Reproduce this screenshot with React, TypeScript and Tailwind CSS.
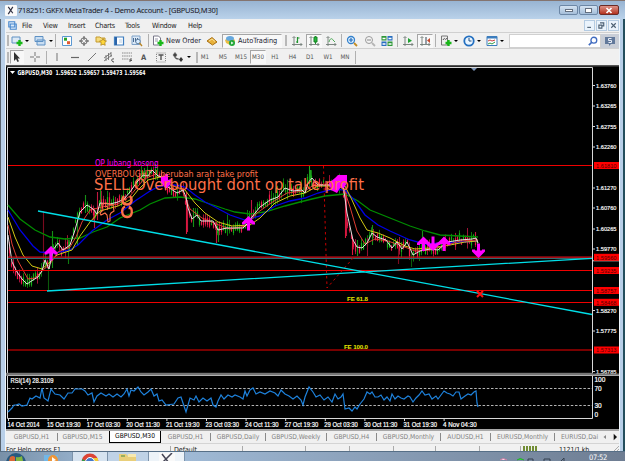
import type { ReactNode } from "react";
import { clsx } from "clsx";

type Point = [number, number];

const white: Point[] = [
  [8, 235], [12, 262], [17, 272], [22, 279], [27, 284], [33, 280], [38, 277], [42, 271], [45, 260], [49, 269], [53, 250], [58, 243],
  [63, 250], [70, 245], [75, 230], [80, 212], [87, 205], [93, 209], [97, 214], [100, 203], [110, 204], [118, 202], [124, 199],
  [130, 192], [137, 182], [143, 175], [148, 176], [152, 170], [158, 176], [163, 177], [168, 187], [177, 193], [183, 190],
  [186, 197], [188, 208], [192, 219], [197, 215], [201, 221], [213, 221], [218, 230], [227, 228], [243, 228], [248, 223], [252, 217], [260, 207],
  [270, 200], [278, 197], [285, 188], [293, 191], [302, 190], [305, 193], [308, 183], [312, 178], [318, 185], [330, 185], [343, 184],
  [347, 213], [353, 240], [357, 247], [362, 248], [367, 243], [372, 233], [377, 237], [386, 240], [392, 248], [397, 242], [402, 249],
  [407, 242], [413, 255], [420, 251], [430, 249], [438, 250], [447, 242], [454, 241], [460, 240], [472, 239], [476, 238], [478, 243]
];

const red: Point[] = [
  [8, 225], [12, 244], [18, 261], [28, 279], [35, 278], [43, 270], [50, 264], [58, 252], [70, 247], [76, 237], [82, 222], [90, 210],
  [102, 207], [118, 204], [130, 196], [144, 179], [156, 174], [168, 183], [182, 190], [190, 209], [202, 218], [216, 224], [230, 229],
  [246, 226], [257, 213], [271, 203], [287, 193], [305, 191], [315, 184], [330, 185], [343, 186], [350, 207], [357, 231], [365, 244],
  [375, 239], [388, 241], [402, 246], [415, 251], [430, 250], [447, 245], [460, 241], [478, 240]
];

const yellow: Point[] = [
  [8, 217], [15, 237], [23, 255], [32, 266], [42, 269], [50, 262], [57, 255], [72, 250], [80, 236], [90, 222], [100, 211], [118, 206],
  [130, 200], [138, 190], [148, 180], [160, 177], [170, 185], [185, 190], [195, 203], [205, 213], [218, 222], [232, 226], [250, 225],
  [260, 218], [275, 203], [290, 196], [305, 193], [318, 186], [345, 186], [352, 200], [360, 218], [367, 230], [378, 233], [390, 238],
  [405, 246], [415, 249], [430, 248], [450, 245], [465, 242], [478, 241]
];

const blue: Point[] = [
  [8, 210], [20, 230], [33, 246], [40, 252], [55, 253], [70, 250], [78, 245], [92, 231], [107, 220], [120, 213], [135, 201], [150, 191],
  [160, 186], [175, 185], [185, 187], [195, 195], [205, 202], [215, 207], [230, 215], [245, 220], [260, 216], [275, 206], [290, 201],
  [305, 198], [318, 193], [333, 189], [345, 190], [355, 201], [365, 215], [378, 225], [390, 231], [410, 240], [425, 244], [445, 243],
  [460, 242], [478, 241]
];

const green: Point[] = [
  [8, 205], [20, 219], [35, 230], [50, 237], [65, 239], [80, 238], [93, 232], [107, 227], [120, 218], [140, 210], [150, 204], [165, 198],
  [180, 197], [195, 199], [210, 204], [225, 209], [235, 212], [250, 214], [265, 212], [285, 206], [300, 202], [312, 199], [325, 196],
  [345, 194], [358, 201], [370, 210], [390, 218], [410, 226], [425, 231], [440, 235], [460, 236], [478, 237]
];

const rsi: Point[] = [
  [8, 412], [12, 408], [14, 405], [16, 405], [19, 404], [22, 406], [27, 405], [30, 398], [32, 399], [36, 396], [40, 398], [42, 388],
  [44, 398], [48, 401], [51, 389], [55, 394], [60, 395], [64, 399], [68, 393], [72, 393], [75, 389], [82, 389], [85, 391], [88, 395],
  [92, 393], [94, 402], [97, 396], [101, 393], [106, 396], [109, 394], [113, 397], [117, 394], [121, 397], [124, 394], [127, 389],
  [129, 396], [131, 390], [134, 391], [138, 387], [141, 392], [144, 395], [148, 392], [151, 389], [154, 396], [157, 394], [159, 401],
  [162, 400], [166, 405], [174, 404], [178, 398], [181, 397], [184, 406], [186, 412], [190, 398], [194, 400], [196, 396], [199, 402],
  [203, 398], [207, 401], [211, 398], [213, 405], [216, 407], [218, 401], [221, 395], [224, 399], [228, 395], [232, 397], [235, 395],
  [240, 397], [243, 399], [245, 391], [247, 396], [250, 390], [253, 388], [256, 394], [260, 392], [265, 394], [270, 391], [275, 393],
  [278, 396], [281, 390], [285, 394], [289, 396], [293, 399], [297, 396], [301, 400], [303, 405], [305, 397], [309, 387], [313, 392],
  [316, 397], [320, 395], [324, 400], [328, 397], [332, 402], [335, 394], [338, 399], [341, 397], [343, 394], [345, 409], [349, 408],
  [352, 411], [355, 407], [357, 409], [360, 404], [364, 399], [367, 392], [370, 394], [372, 392], [375, 397], [378, 397], [381, 395],
  [384, 400], [387, 397], [390, 401], [392, 394], [395, 399], [398, 396], [401, 398], [404, 399], [408, 396], [410, 397], [413, 402],
  [416, 398], [419, 395], [422, 391], [425, 395], [429, 394], [432, 399], [436, 396], [438, 399], [441, 395], [444, 391], [447, 393],
  [450, 394], [453, 396], [456, 392], [459, 392], [461, 399], [465, 396], [468, 394], [471, 395], [474, 392], [476, 391], [477, 403], [478, 407]
];

const spikes: [number, number, number, string][] = [
  [43, 211, 262, "#7a0a1e"], [48, 268, 291, "#0b5a0b"], [52, 231, 268, "#159015"], [65, 238, 258, "#8f1030"], [68, 240, 264, "#0f7a0f"],
  [77, 215, 245, "#159015"], [85, 195, 213, "#159015"], [94, 208, 228, "#c01840"], [97, 192, 220, "#c01840"], [100, 190, 212, "#159015"],
  [144, 168, 185, "#159015"], [157, 167, 180, "#159015"], [186, 192, 234, "#e0163c"], [187, 200, 232, "#c01840"], [193, 208, 227, "#159015"],
  [216, 222, 243, "#c01840"], [218, 228, 242, "#159015"], [251, 200, 222, "#c01840"], [309, 166, 184, "#1fa01f"], [310, 170, 180, "#1fa01f"],
  [345, 190, 238, "#e0163c"], [346, 192, 236, "#c01840"], [352, 238, 255, "#e0163c"], [357, 240, 256, "#159015"], [367, 238, 256, "#8f1030"],
  [372, 225, 245, "#159015"], [398, 246, 264, "#7a0a1e"], [411, 250, 267, "#0b5a0b"], [422, 231, 250, "#159015"], [475, 232, 243, "#c01840"],
  [478, 244, 260, "#c01840"]
];

const prices: [string, number][] = [
  ["1.63760", 85.5], ["1.63265", 106], ["1.62755", 126.5], ["1.62260", 147], ["1.61270", 188], ["1.60760", 208], ["1.60265", 229],
  ["1.59770", 249], ["1.58270", 310.5], ["1.57775", 331], ["1.56785", 371.5]
];

const levels: [string, number][] = [
  ["1.61810", 165.5], ["1.59560", 257.3], ["1.59235", 270.5], ["1.58757", 290.5], ["1.58468", 302.3], ["1.57313", 350]
];

const dates = [
  "14 Oct 2014", "15 Oct 19:30", "17 Oct 03:30", "20 Oct 11:30", "21 Oct 19:30", "23 Oct 03:30",
  "24 Oct 11:30", "27 Oct 19:30", "29 Oct 03:30", "30 Oct 11:30", "31 Oct 19:30", "4 Nov 04:30"
];

const toPoints = (list: Point[]) => list.map((p) => p.join(",")).join(" ");

function valueAt(list: Point[], x: number) {
  for (let i = 1; i < list.length; i++) {
    const [x0, y0] = list[i - 1];
    const [x1, y1] = list[i];
    if (x <= x1) return y0 + ((y1 - y0) * (x - x0)) / (x1 - x0);
  }
  return list[list.length - 1][1];
}

function buildCandles() {
  let seed = 71;
  const rnd = () => {
    seed = (seed * 16807) % 2147483647;
    return seed / 2147483647;
  };
  const candles = [];
  for (let x = 9.5; x < 478; x += 2) {
    const slope = valueAt(white, x + 2) - valueAt(white, x - 2);
    const mid = valueAt(white, x) + slope * 0.3 + (rnd() - 0.5) * 6;
    const up = rnd() > 0.5 + slope * 0.06;
    const body = 1 + rnd() * 3.2;
    const wick = body + 1 + rnd() * rnd() * 9;
    candles.push({ x, mid, body, wick, color: up ? "#16b016" : "#f0184a", dim: up ? "#0c7a0c" : "#a01236" });
  }
  return candles;
}

const candles = buildCandles();

function Arrow({ x, y, down = false }: { x: number; y: number; down?: boolean }) {
  return (
    <g transform={`translate(${x} ${y})${down ? " scale(1 -1)" : ""}`} fill="none" stroke="#ff00ff" strokeWidth="3">
      <path d="M0 7.500V-5M-5 1.500V0L0-5L5 0V1.500" />
      <path d="M-4 0L0-5L4 0Z" fill="#ff00ff" strokeWidth="1" />
    </g>
  );
}

function Chart() {
  return (
    <svg viewBox="6 65 613 364" className="block h-[364px] w-[613px] shrink-0 bg-black font-['DejaVu_Sans_Condensed','DejaVu_Sans',sans-serif]">
      <rect x="6" y="65" width="613" height="1.500" fill="#555" />
      <path d="M7.500 373V67.500H592.500V373" fill="none" stroke="#d8d8d8" />
      <path d="M471 68h6l-3 3z" fill="#7d93b5" />

      {candles.map((c) => (
        <g key={c.x}>
          <path d={`M${c.x} ${c.mid - c.wick}V${c.mid + c.wick * 0.8}`} stroke={c.dim} />
          <path d={`M${c.x} ${c.mid - c.body}V${c.mid + c.body}`} stroke={c.color} strokeWidth="1.200" />
        </g>
      ))}
      {spikes.map(([x, y0, y1, color], i) => (
        <path key={i} d={`M${x + 0.5} ${y0}V${y1}`} stroke={color} strokeWidth="1.100" />
      ))}

      <g fill="none" strokeWidth="1">
        <polyline points={toPoints(green)} stroke="#008c00" strokeWidth="1.300" />
        <polyline points={toPoints(blue)} stroke="#0000e6" strokeWidth="1.300" />
        <polyline points={toPoints(yellow)} stroke="#d2c814" />
        <polyline points={toPoints(red)} stroke="#e03c32" />
        <polyline points={toPoints(white)} stroke="#e6dcdc" />
      </g>

      <path d="M8 258.500H592" stroke="#2f6a70" />
      <path d="M8 257.200H592" stroke="#d8101c" strokeWidth="1.300" />
      <path d="M8 165.500H592M8 270.500H592M8 290.500H592M8 302.500H592M8 350H592" stroke="#f00000" strokeWidth="1.200" />
      <path d="M323.500 166L327 288L354 257" fill="none" stroke="#c80000" strokeDasharray="2.500 3" />
      <path d="M38 211L592 314.500M47 291L592 258.300" stroke="#00dfe8" strokeWidth="1.300" />
      <path d="M477 291l6 6m0-6l-6 6" stroke="#ff1010" strokeWidth="2" />

      <Arrow x={51} y={253} />
      <Arrow x={248.500} y={223} />
      <path d="M161 176h4v-2h3v6l3-1v4l-4 5h-2l-4-6z" fill="#ff00ff" />
      <path d="M329 183l6-5 3-3h9v8l-3 5-4 0-3 5-6-3z" fill="#ff00ff" />
      <Arrow x={423.500} y={243.500} />
      <Arrow x={433} y={244} down />
      <Arrow x={444} y={243.500} />
      <Arrow x={478.500} y={251} down />

      <g fill="#ff7048">
        <text x="95" y="166" fontSize="8" fill="#ff00ff" textLength="63.500" lengthAdjust="spacingAndGlyphs">OP lubang kosong</text>
        <text x="95" y="176.500" fontSize="9.300" textLength="163" lengthAdjust="spacingAndGlyphs">OVERBOUGHT ! berubah arah take profit</text>
        <text x="94" y="190" fontSize="16.500" textLength="270" lengthAdjust="spacingAndGlyphs">SELL Overbought dont op take profit</text>
      </g>
      <g fill="none" stroke="#ff7048">
        <path d="M102 204l4-1 7 2 1 6-3 2-1 2v6l-2 1-1-7-2-2-4 2-1-2 3-3zM105 206l3 1-1 3" strokeWidth="1.100" />
        <path d="M124 196c-3 4-1.500 8.500 3 8.500s6-4.500 3-8.500M125 206.500c-4 2-4 10 2 10.500s6-8.500 2-10.500" strokeWidth="2.400" />
        <path d="M124 199.500h2.500M128.500 208.500h2.500" strokeWidth="1.500" />
      </g>
      <g fontSize="6.200" fontWeight="bold" fill="#e8e800" className="font-['Liberation_Sans',sans-serif]">
        <text x="347" y="300.500" textLength="21">FE 61.8</text>
        <text x="344" y="348.500" textLength="24">FE 100.0</text>
      </g>

      <path d="M10 71h5l-2.500 3z" fill="#fff" />
      <text x="17.500" y="74.800" fontSize="6.700" fontWeight="bold" fill="#fff" textLength="128" lengthAdjust="spacingAndGlyphs" className="whitespace-pre">
        GBPUSD,M30  1.59652 1.59657 1.59473 1.59564
      </text>

      <g fontSize="6.200" stroke="#f4f4f4" strokeWidth=".2" fill="#f4f4f4" className="font-['Liberation_Sans',sans-serif]">
        {prices.map(([label, y]) => (
          <g key={label}>
            <path d={`M593 ${y}h2`} stroke="#d8d8d8" strokeWidth="1" />
            <text x="596" y={y + 2.200} textLength="20.500" lengthAdjust="spacingAndGlyphs">{label}</text>
          </g>
        ))}
      </g>
      <path d="M593 260.800H619" stroke="#d8d8d8" />
      {levels.map(([label, y]) => (
        <g key={label}>
          <rect x="594" y={y - 3.500} width="25" height="7" fill="#f00" />
          <text x="596" y={y + 2.200} fontSize="6.200" textLength="20.500" lengthAdjust="spacingAndGlyphs" fill="#500000" className="font-['Liberation_Sans',sans-serif]">{label}</text>
        </g>
      ))}

      <rect x="6" y="372.800" width="587" height="3" fill="#777" />
      <path d="M6 374.500H619" stroke="#777" strokeWidth="2" />
      <path d="M7.500 375.500H619" stroke="#c4c4c4" strokeWidth=".8" />
      <path d="M7.500 376V418.500H592.500V376" fill="none" stroke="#d8d8d8" />
      <path d="M8 388.500H592M8 405.500H592" stroke="#b4b4b4" strokeDasharray="2.500 1.700" />
      <polyline points={toPoints(rsi)} fill="none" stroke="#1e82dc" strokeWidth="1.200" />
      <g fontSize="6.500" fill="#fff" stroke="#fff" strokeWidth=".2" className="font-['Liberation_Sans',sans-serif]">
        <text x="10.500" y="383" textLength="43" lengthAdjust="spacingAndGlyphs">RSI(14) 28.3109</text>
        <text x="594.500" y="382">100</text>
        <text x="594.500" y="390.700">70</text>
        <text x="594.500" y="407.500">30</text>
        <text x="594.500" y="416.800">0</text>
        {dates.map((label, i) => (
          <g key={label}>
            <path d={`M${8.500 + i * 39.600} 419v2`} stroke="#d8d8d8" strokeWidth="1" />
            <text x={7.500 + i * 39.600} y="426.500" textLength={i === 0 ? 32 : 33.500} lengthAdjust="spacingAndGlyphs">{label}</text>
          </g>
        ))}
      </g>
    </svg>
  );
}

function Icon({ children, className }: { children: ReactNode; className?: string }) {
  return (
    <svg viewBox="0 0 12 12" className={clsx("shrink-0", className ?? "h-3 w-3")} fill="none">
      {children}
    </svg>
  );
}

function Cell({ className, pressed = false, children }: { className: string; pressed?: boolean; children?: ReactNode }) {
  return (
    <div
      className={clsx(
        "flex shrink-0 items-center justify-center whitespace-nowrap",
        pressed ? "h-[14px] border border-[#a5a5a5] border-r-[#f8f8f8] border-b-[#f8f8f8] bg-[#f8f8f8]" : "h-full",
        className
      )}
    >
      {children}
    </div>
  );
}

function Caret({ className }: { className: string }) {
  return (
    <Cell className={className}>
      <span className="h-0 w-0 border-x-2 border-t-2 border-x-transparent border-t-black" />
    </Cell>
  );
}

function Sep({ className }: { className: string }) {
  return (
    <Cell className={className}>
      <span className="h-[13px] w-px bg-[#b0b0b0]" />
    </Cell>
  );
}

function Grip({ className }: { className: string }) {
  return (
    <Cell className={className}>
      <span className="h-[11px] w-[2px] bg-[#b8b8b8]" />
    </Cell>
  );
}

const plus = <path d="M8.500 5v6M5.500 8h6" stroke="#18b818" strokeWidth="2.400" />;
const axes = <path d="M3 2v9M1 9.500h10M1.500 3L3 1.500 4.500 3M9.500 8L11 9.500 9.500 11" stroke="#6f7a75" strokeWidth=".9" />;

function TitleBar() {
  return (
    <div className="flex h-[19px] shrink-0 items-center border-t border-[#84746f] bg-gradient-to-b from-[#98b4d2] to-[#bad2ea] pr-[6px] pl-[5px]">
      <svg viewBox="0 0 12 12" className="h-[11px] w-3 rounded-[1px] bg-[#fafafa]">
        <path d="M3 2l5 7M8 2L3 10" stroke="#334" strokeWidth="1.300" />
      </svg>
      <span className="ml-[1px] pt-px font-['Noto_Sans',sans-serif] text-[7.500px] leading-none tracking-[-0.250px] whitespace-pre text-[#171522]">718251: GKFX MetaTrader 4 - Demo Account - [GBPUSD,M30]</span>
      <div className="ml-auto flex h-[10px] gap-[1px] pt-0 [&>span]:flex [&>span]:items-center [&>span]:justify-center [&>span]:rounded-[2px] [&>span]:border">
        <span className="w-[19px] border-[#6c87a6] bg-gradient-to-b from-[#d4e3f2] to-[#a5bed9]">
          <i className="h-[3px] w-[8px] border border-[#657080] bg-white" />
        </span>
        <span className="w-[19px] border-[#6c87a6] bg-gradient-to-b from-[#d4e3f2] to-[#a5bed9]">
          <i className="h-[5px] w-[7px] border border-[#657080] bg-white" />
        </span>
        <span className="w-[20px] border-[#6b2b26] bg-gradient-to-b from-[#dd9187] to-[#b3301d]">
          <svg viewBox="0 0 8 7" className="h-[7px] w-2">
            <path d="M1.500 1l5 5m0-5l-5 5" stroke="#fff" strokeWidth="1.700" />
          </svg>
        </span>
      </div>
    </div>
  );
}

function MenuBar() {
  return (
    <div className="flex h-[13px] items-center bg-[#f0f0f0] pl-[2px] font-['DejaVu_Sans_Condensed',sans-serif] text-[7.300px] leading-none tracking-[-0.250px] text-[#222]">
      <Icon className="h-[9px] w-[9px]">
        <path d="M1 1h8v7H1zM3 4h8v7H3z" fill="#dceafa" stroke="#4787cc" strokeWidth="1.400" />
      </Icon>
      <span className="ml-[5px] w-[21px]">File</span>
      <span className="w-[25px]">View</span>
      <span className="w-[27px]">Insert</span>
      <span className="w-[30px]">Charts</span>
      <span className="w-[27px]">Tools</span>
      <span className="w-[36px]">Window</span>
      <span>Help</span>
      <div className="ml-auto flex h-[11px] gap-px">
        {["M3 8.500h5", "M4 2.500h5v4H7M2.500 5.500h4v4h-4z", "M3 3l6 6m0-6L3 9"].map((d) => (
          <span key={d} className="flex w-[11px] items-center justify-center border border-[#b4cbe2] bg-[#eaf3fc]">
            <Icon className="h-[9px] w-[9px]">
              <path d={d} stroke="#4d6073" strokeWidth="1.500" />
            </Icon>
          </span>
        ))}
      </div>
    </div>
  );
}

function MainToolbar() {
  return (
    <div className="flex h-[16px] items-center border-t border-[#d0d0d0] bg-[#f1f1f1] font-['DejaVu_Sans_Condensed',sans-serif] text-[7.300px] leading-none text-[#181830]">
      <Grip className="w-[4px]" />
      <Cell className="w-[13px]"><Icon><path d="M1 2h8v6H1z" fill="#dce9f5" stroke="#5e91c4" />{plus}</Icon></Cell>
      <Caret className="w-[8px]" />
      <Cell className="w-[17px]"><Icon><path d="M1 1.500h8v5H1zM3 5h8v5H3z" fill="#c9def2" stroke="#5e91c4" /></Icon></Cell>
      <Caret className="w-[5px]" />
      <Sep className="w-[5px]" />
      <Cell className="w-[18px]">
        <Icon><path d="M1.500 1.500h9v9h-9z" fill="#fff" stroke="#5b98d2" /><path d="M3 4.200h3" stroke="#28a428" strokeWidth="3" /><path d="M6 7.700h3" stroke="#e25b30" strokeWidth="3" /></Icon>
      </Cell>
      <Cell className="w-[16px]"><Icon><circle cx="6" cy="6" r="3.200" stroke="#6a6a6a" /><path d="M6 1v4M6 7v4M1 6h4M7 6h4" stroke="#555" /></Icon></Cell>
      <Cell className="w-[18px]">
        <Icon><path d="M1 2h4l1 1h4v4H1z" fill="#f6dc7c" stroke="#c49a2f" /><path d="M8 3.500l1.200 2.200 2.300.3-1.700 1.700.4 2.600L8 9.200l-2.200 1.100.4-2.600L4.500 6l2.300-.3z" fill="#ffd83c" stroke="#a87c16" strokeWidth=".7" /></Icon>
      </Cell>
      <Cell className="w-[18px]"><Icon><path d="M1.500 2h9v8h-9z" fill="#fff" stroke="#3e7ec0" strokeWidth="1.200" /><path d="M3 2v8" stroke="#2c64a8" strokeWidth="2" /><path d="M6 5h3M6 7h3" stroke="#b6cbe0" /></Icon></Cell>
      <Cell className="w-[17px]">
        <Icon><path d="M1 1h8v8.500H1z" fill="#dbe8f6" stroke="#7fa2c8" /><path d="M2.500 3v4M4.500 3v4M6.500 3v2" stroke="#486a90" /><circle cx="7" cy="6.500" r="2.300" fill="#d8ecff" stroke="#5c7d9e" /><path d="M8.500 8l2.500 3" stroke="#b88424" strokeWidth="1.300" /></Icon>
      </Cell>
      <Sep className="w-[7px]" />
      <Cell className="w-[11px]"><Icon><path d="M1.500 1h5l2 2v7h-7z" fill="#fff" stroke="#778" /><path d="M3 4h3M3 6h3" stroke="#99a" />{plus}</Icon></Cell>
      <Cell className="w-[41px]">New Order</Cell>
      <Cell className="w-[16px]"><Icon><path d="M1 6l5-3.500L11 7 6.500 10z" fill="#e8b13a" stroke="#a86f14" /><path d="M3 6l3-2 3 2.500" stroke="#fbe297" /></Icon></Cell>
      <Cell pressed className="ml-[2px] w-[60px] justify-start gap-[2px] pl-[1px]">
        <Icon><path d="M1 5l5-3.500L11 5l-1 3.500L6 10 2 8z" fill="#e8bd43" /><ellipse cx="6" cy="3.500" rx="4" ry="2.500" fill="#66a8de" /><circle cx="8" cy="8" r="3" fill="#21a637" /><path d="M7.200 6.500v3l2.300-1.500z" fill="#fff" /></Icon>
        AutoTrading
      </Cell>
      <Grip className="ml-[1px] w-[5px]" />
      <Cell className="w-[17px]"><Icon>{axes}<path d="M6.500 2v6M6.500 3h2M5 7h1.500" stroke="#20942e" strokeWidth="1.200" /></Icon></Cell>
      <Cell pressed className="ml-[1px] w-[16px]"><Icon>{axes}<path d="M7.500 1v8" stroke="#20942e" /><path d="M6 2h3v5H6z" fill="#25b83a" stroke="#168224" /></Icon></Cell>
      <Cell className="w-[18px]"><Icon>{axes}<path d="M4 7c1-4 3-4 4-2l2 2" stroke="#4ba955" /></Icon></Cell>
      <Sep className="w-[3px]" />
      <Cell className="w-[18px]"><Icon><circle cx="5" cy="5" r="3.500" fill="#e0f1ff" stroke="#3381cc" strokeWidth="1.300" /><path d="M3 5h4M5 3v4" stroke="#236cbb" strokeWidth="1.200" /><path d="M8 8l3 3" stroke="#c38c24" strokeWidth="1.800" /></Icon></Cell>
      <Cell className="w-[17px]"><Icon><circle cx="5" cy="5" r="3.500" fill="#f4f4f4" stroke="#9a9a9a" /><path d="M3 5h4" stroke="#888" /><path d="M8 8l3 3" stroke="#b5b5b5" strokeWidth="1.800" /></Icon></Cell>
      <Cell className="w-[18px]">
        <Icon><path d="M.5 1h5v4.500h-5zM6.500 6.500h5V11h-5z" fill="#2e9738" /><path d="M6.500 1h5v4.500h-5zM.5 6.500h5V11h-5z" fill="#286fc0" /><path d="M1.500 3.500h3M7.500 3.500h3M1.500 9h3M7.500 9h3" stroke="#fff" strokeWidth="1.500" /></Icon>
      </Cell>
      <Sep className="w-[3px]" />
      <Cell className="w-[18px]"><Icon>{axes}<path d="M6 3l4 2.700L6 8z" fill="#20a232" /></Icon></Cell>
      <Cell pressed className="w-[16px]"><Icon>{axes}<path d="M7 2v7" stroke="#345" /><path d="M11 3L8 5.500 11 8z" fill="#c64c31" /></Icon></Cell>
      <Sep className="w-[5px]" />
      <Cell className="w-[15px]"><Icon><path d="M1.500 1h6v9h-6z" fill="#eee" stroke="#777" /><path d="M3 5c2-4 2 2 4-2" stroke="#555" />{plus}</Icon></Cell>
      <Caret className="w-[6px]" />
      <Cell className="ml-[2px] w-[16px]"><Icon><circle cx="6" cy="6" r="4.700" fill="#e9f5ff" stroke="#236fc0" strokeWidth="1.800" /><path d="M6 3v3h2.500" stroke="#234e80" /></Icon></Cell>
      <Caret className="w-[4px]" />
      <Cell className="ml-[2px] w-[17px]"><Icon><path d="M1 1.500h10v9H1z" fill="#fff" stroke="#3c7dbd" /><path d="M1 2.500h10" stroke="#3c7dbd" strokeWidth="2" /><path d="M2 6l2-1 2 1 3-1" stroke="#c94040" /><path d="M2 9l2-1 2 1 3-2" stroke="#329b45" /></Icon></Cell>
      <Caret className="w-[4px]" />
      <div className="ml-auto flex h-[14px] w-[92px] items-center justify-end border border-[#d0d0d0] bg-white pr-[2px]">
        <Icon className="h-[10px] w-[10px]"><circle cx="7" cy="5" r="3.500" stroke="#416cc0" strokeWidth="1.600" /><path d="M4.500 7.500L1 11" stroke="#416cc0" strokeWidth="2" /></Icon>
      </div>
      <div className="flex h-[14px] w-[18px] items-center justify-center bg-[#c9ced7]">
        <Icon><path d="M1 2h10v7H7l-2 2V9H1z" fill="#62799b" /><path d="M7.500 3.500h-3v2h3v2h-3" stroke="#e8eef8" /></Icon>
      </div>
    </div>
  );
}

function DrawToolbar() {
  return (
    <div className="flex h-[17px] items-center border-t border-[#d0d0d0] bg-[#f0f0f0] font-['DejaVu_Sans_Condensed',sans-serif] text-[6.200px] leading-none text-[#555]">
      <Grip className="w-[4px]" />
      <Cell pressed className="w-[14px]"><Icon><path d="M3 1v9l2-2 1.500 3 1.500-.7L6.600 7.500H9z" fill="#333" /></Icon></Cell>
      <Cell className="w-[22px]"><Icon><path d="M6 1v4M6 7v4M1 6h4M7 6h4" stroke="#777" /></Icon></Cell>
      <Sep className="w-[1px]" />
      <Cell className="w-[20px]"><Icon><path d="M6 2v8" stroke="#888" strokeWidth="1.200" /></Icon></Cell>
      <Cell className="w-[16px]"><Icon><path d="M2 6.500h8" stroke="#666" strokeWidth="1.200" /></Icon></Cell>
      <Cell className="w-[17px]"><Icon><path d="M2 10l8-8" stroke="#777" /></Icon></Cell>
      <Cell className="w-[18px]"><Icon><path d="M1 7l7-5M1 10l8-6M3 4v6M5.500 2v7M8 1v5" stroke="#666" strokeWidth=".8" /><path d="M11 8c-3-1-3 3 0 3" stroke="#444" /></Icon></Cell>
      <Cell className="w-[17px]"><Icon><path d="M1 2h10M1 5h10M1 8h7" stroke="#888" strokeDasharray="1.500 .7" /><path d="M9 11V8h2M9 9.500h2" stroke="#555" /></Icon></Cell>
      <Cell className="w-[17px] pt-px text-[7.500px] font-bold">A</Cell>
      <Cell className="w-[18px]"><Icon><path d="M1.500 2h9v9h-9z" stroke="#888" strokeDasharray="1 1" /><path d="M3.500 4h5M6 4v5" stroke="#555" strokeWidth="1.400" /></Icon></Cell>
      <Cell className="w-[16px]"><Icon><path d="M3 1.500l2 2.500-2 2.500L1 4zM3 6c0 2 2 2.500 4 2" fill="#444" stroke="#666" strokeWidth=".7" /><path d="M9 6l2 2.500L9 11 7 8.500z" fill="#333" /></Icon></Cell>
      <Caret className="w-[6px]" />
      <Grip className="ml-[1px] w-[8px]" />
      <Cell className="ml-[-5px] w-[18px]">M1</Cell>
      <Cell className="w-[18px]">M5</Cell>
      <Cell className="w-[18px]">M15</Cell>
      <Cell pressed className="w-[16px]">M30</Cell>
      <Cell className="w-[18px]">H1</Cell>
      <Cell className="w-[17px]">H4</Cell>
      <Cell className="w-[18px]">D1</Cell>
      <Cell className="w-[18px]">W1</Cell>
      <Cell className="w-[16px]">MN</Cell>
      <Sep className="w-[4px]" />
    </div>
  );
}

function Tabs() {
  const tab = "flex shrink-0 items-center justify-center border-r border-[#8a8a8a] h-[8px]";
  return (
    <div className="flex h-[14px] items-center overflow-hidden border-t-2 border-[#a8a8a8] bg-[#f0f0f0] font-['DejaVu_Sans_Condensed',sans-serif] text-[6.700px] leading-none whitespace-nowrap text-[#808080]">
      <div className={clsx(tab, "w-[52px]")}>GBPUSD,H1</div>
      <div className="flex w-[51px] shrink-0 justify-center pr-[2px]">GBPUSD,M15</div>
      <div className="flex h-[12px] w-[52px] shrink-0 items-center justify-center border border-t-0 border-black bg-white text-black">GBPUSD,M30</div>
      <div className={clsx(tab, "w-[50px]")}>GBPUSD,H1</div>
      <div className={clsx(tab, "w-[55px]")}>GBPUSD,Daily</div>
      <div className={clsx(tab, "w-[61px]")}>GBPUSD,Weekly</div>
      <div className={clsx(tab, "w-[50px]")}>GBPUSD,H4</div>
      <div className={clsx(tab, "w-[64px]")}>GBPUSD,Monthly</div>
      <div className={clsx(tab, "w-[50px]")}>AUDUSD,H1</div>
      <div className={clsx(tab, "w-[64px]")}>EURUSD,Monthly</div>
      <div className="w-[47px] shrink-0 pl-[6px]">EURUSD,Dai</div>
      <Icon className="h-[6px] w-[6px]"><path d="M8 2L3 6l5 4z" fill="#888" /></Icon>
      <Icon className="ml-[3px] h-[8px] w-[8px]"><path d="M4 1l5 5-5 5z" fill="#111" /></Icon>
    </div>
  );
}

function StatusBar() {
  const cell = "h-[6px] shrink-0 border-l border-[#aaa]";
  return (
    <div className="flex h-[8px] items-start overflow-hidden border-t border-[#d4d4d4] bg-[#f1f1f1] pt-[2px] font-['DejaVu_Sans_Condensed',sans-serif] text-[7px] leading-[9px] whitespace-nowrap text-[#151515]">
      <div className="w-[164px] shrink-0 tracking-[-0.100px]">For Help, press F1</div>
      <div className={clsx(cell, "w-[72px] pl-[3px]")}>Default</div>
      <div className={clsx(cell, "w-[63px]")} />
      <div className={clsx(cell, "w-[44px]")} />
      <div className={clsx(cell, "w-[44px]")} />
      <div className={clsx(cell, "w-[42px]")} />
      <div className={clsx(cell, "w-[44px]")} />
      <div className={clsx(cell, "w-[41px]")} />
      <div className={clsx(cell, "flex w-[39px] gap-px pl-[2px]")}>
        {["a", "b", "c", "d", "e"].map((k) => (
          <span key={k} className="w-[2px] bg-[#728d35]" />
        ))}
      </div>
      <div className="tracking-[-0.200px]">1121/1 kb</div>
      <svg viewBox="0 0 6 6" className="ml-auto h-[6px] w-[6px]">
        <path d="M0 6L6 0M3 6l3-3" stroke="#aaa" />
      </svg>
    </div>
  );
}

function Taskbar() {
  return (
    <div className="flex h-[10px] shrink-0 overflow-hidden border-t border-[#566f87] bg-gradient-to-r from-[#7890a8] via-[#a6c2df] via-20% to-[#6e7d92]">
      <div className="flex w-[31px] justify-center">
        <svg viewBox="0 0 20 9" className="h-[9px] w-5">
          <circle cx="10" cy="11" r="10" fill="#275a80" />
          <path d="M4 5q3-2 5 0v4H3z" fill="#d96636" />
          <path d="M10 5q3 1 6-1l1 5H10z" fill="#81b540" />
        </svg>
      </div>
      <div className="flex w-[41px] items-end justify-center">
        <svg viewBox="0 0 16 7" className="h-[7px] w-4">
          <path d="M0 1h14v6H0z" fill="#71b7e8" />
          <circle cx="9" cy="6" r="5" fill="#ee963b" />
          <path d="M8 3l4 3-4 2z" fill="#fff" />
        </svg>
      </div>
      <div className="flex w-[36px] justify-center border-x border-[#7c93ab] bg-[#d6e3f0]">
        <svg viewBox="0 0 18 9" className="h-[9px] w-[18px]">
          <circle cx="9" cy="10" r="8.500" fill="#dc4435" />
          <path d="M1 7l4 2H1z" fill="#2f9d49" />
          <path d="M9 6h8v3H9z" fill="#f2ca37" />
          <circle cx="9" cy="10" r="4.500" fill="#4479c9" stroke="#fff" />
        </svg>
      </div>
      <div className="flex w-[41px] items-end justify-center border-r border-[#7c93ab] bg-[#bfd2e6]">
        <svg viewBox="0 0 20 8" className="h-2 w-5">
          <path d="M1 1h7l2 2h8v5H1z" fill="#e9cf7a" />
          <path d="M10 1h8v3h-8z" fill="#f7e9af" />
          <path d="M3 3h4" stroke="#4a8f45" />
        </svg>
      </div>
      <div className="flex w-[36px] items-end justify-center border-r border-[#7c93ab] bg-[#edf3f8]">
        <svg viewBox="0 0 16 8" className="h-2 w-4 bg-[#f9f9f9]">
          <path d="M3 1l7 9M13 0L4 9" stroke="#445" strokeWidth="1.500" />
        </svg>
      </div>
      <div className="ml-auto flex w-[126px] items-start">
        <svg viewBox="0 0 85 9" className="h-[9px] w-[85px]">
          <path d="M1 8q3-3 7 0" fill="#f2e3ec" stroke="#ce75a0" />
          <path d="M18 8q3-3 7 0" fill="#34d140" stroke="#26aa31" />
          <path d="M29 9V7h5v2M45 9V7h6v2M62 9l3-3v3" fill="none" stroke="#344150" />
        </svg>
        <span className="pt-[2px] pl-[5px] font-['DejaVu_Sans_Condensed',sans-serif] text-[7.500px] leading-none tracking-[-0.300px] text-white">07:52</span>
      </div>
    </div>
  );
}

export default function App() {
  return (
    <div className="flex h-[461px] w-[625px] flex-col overflow-hidden bg-[#bcd3ea]">
      <TitleBar />
      <div className="flex h-[432px] shrink-0">
        <div className="w-[6px] shrink-0 border-x border-l-[#59646f] border-r-[#eef5fb] bg-[#b8cfe8]" />
        <div className="flex w-[613px] shrink-0 flex-col">
          <MenuBar />
          <MainToolbar />
          <DrawToolbar />
          <Chart />
          <Tabs />
          <StatusBar />
        </div>
        <div className="w-[6px] shrink-0 border-r-2 border-l border-l-[#eef5fb] border-r-[#244e5d] bg-[#b8cfe8]" />
      </div>
      <Taskbar />
    </div>
  );
}
